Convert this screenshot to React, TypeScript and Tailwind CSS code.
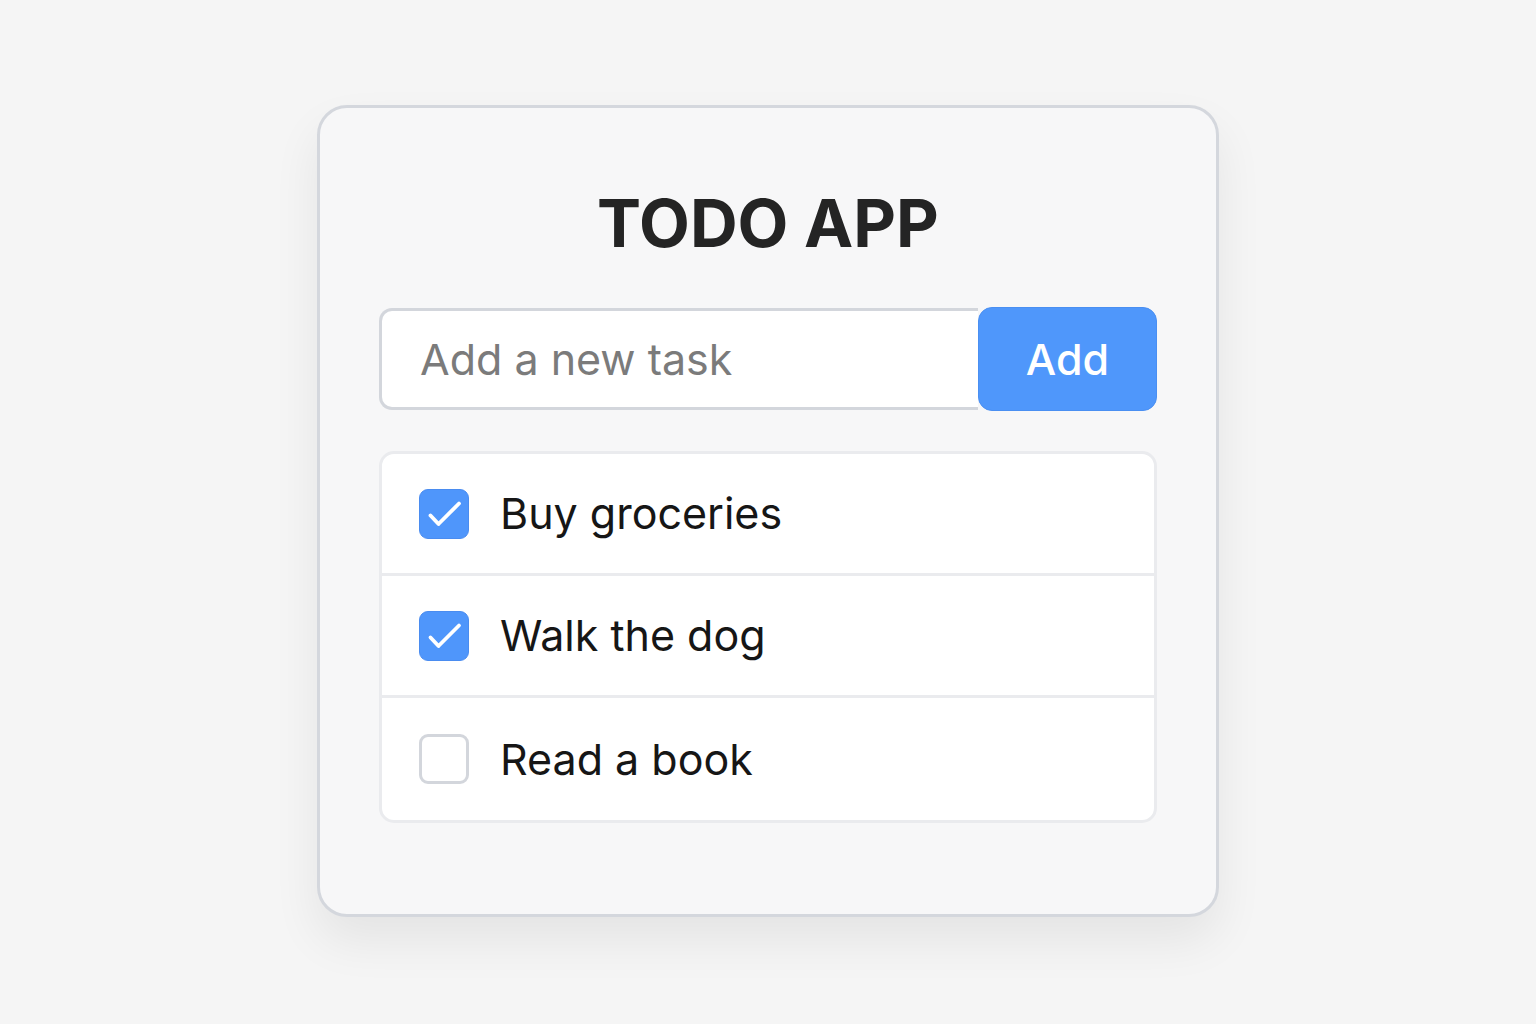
import { useState } from "react";

interface Task {
  id: number;
  label: string;
  done: boolean;
}

const initialTasks: Task[] = [
  { id: 1, label: "Buy groceries", done: true },
  { id: 2, label: "Walk the dog", done: true },
  { id: 3, label: "Read a book", done: false },
];

function CheckBox({ checked }: { checked: boolean }) {
  if (!checked) {
    return <span className="block w-[50px] h-[50px] shrink-0 rounded-[9px] border-[3px] border-[#d3d6dc] bg-white" />;
  }
  return (
    <span className="block w-[50px] h-[50px] shrink-0 rounded-[9px] bg-[#4f96fb] border border-[#4a8cf0]">
      <svg width="48" height="48" viewBox="0 0 48 48" fill="none">
        <path d="M10.5 25.5 L18.5 34 L39 13.5" stroke="white" strokeWidth="3.8" strokeLinecap="round" strokeLinejoin="round" />
      </svg>
    </span>
  );
}

export default function App() {
  const [tasks, setTasks] = useState<Task[]>(initialTasks);
  const [text, setText] = useState("");

  const toggle = (id: number) =>
    setTasks((prev) => prev.map((t) => (t.id === id ? { ...t, done: !t.done } : t)));

  const add = () => {
    if (!text.trim()) return;
    setTasks((prev) => [...prev, { id: Date.now(), label: text.trim(), done: false }]);
    setText("");
  };

  return (
    <div className="min-h-screen bg-[#f5f5f5] pt-[105px] font-['Inter',sans-serif]">
      <div className="mx-auto w-[902px] h-[812px] rounded-[30px] border-[3px] border-[#d4d7dd] bg-[#f7f7f8] px-[59px] pt-[82px] shadow-[0_24px_48px_rgba(0,0,0,0.07)]">
        <h1 className="text-center text-[66px] leading-none font-bold text-[#242424]">TODO APP</h1>

        <div className="mt-[51px] flex items-center h-[104px]">
          <input
            value={text}
            onChange={(e) => setText(e.target.value)}
            placeholder="Add a new task"
            className="flex-1 min-w-0 h-[102px] rounded-l-[13px] border-[3px] border-r-0 border-[#d3d6dc] bg-white pl-[38px] text-[43px] text-[#222] placeholder:text-[#7b7b7b] outline-none"
          />
          <button
            onClick={add}
            className="w-[179px] shrink-0 h-[104px] rounded-[14px] bg-[#4f97fb] border border-[#4a8ff2] text-white text-[43px] font-medium"
          >
            Add
          </button>
        </div>

        <ul className="mt-[40px] rounded-[15px] border-[3px] border-[#eaebee] bg-white divide-y-[3px] divide-[#eaebee] overflow-hidden">
          {tasks.map((t) => (
            <li
              key={t.id}
              onClick={() => toggle(t.id)}
              className="flex items-center gap-[31px] h-[122px] pl-[37px] cursor-pointer"
            >
              <CheckBox checked={t.done} />
              <span className="text-[43px] text-[#161616]">{t.label}</span>
            </li>
          ))}
        </ul>
      </div>
    </div>
  );
}
